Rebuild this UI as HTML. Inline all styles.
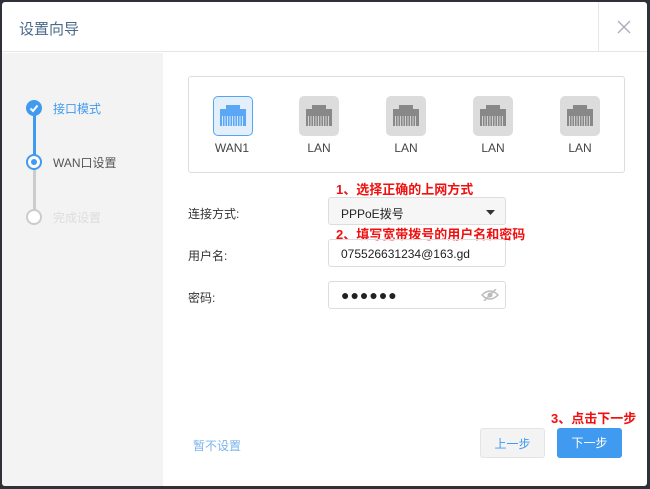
<!DOCTYPE html>
<html><head><meta charset="utf-8"><style>
*{margin:0;padding:0;box-sizing:border-box}
body{width:650px;height:489px;background:#2e3138;font-family:"Liberation Sans","Noto Sans CJK SC",sans-serif;position:relative;overflow:hidden}
.dlg{position:absolute;left:2px;top:2px;width:645px;height:484px;background:#fff;border-radius:3px;overflow:hidden}
.hd{position:absolute;left:0;top:0;width:100%;height:50px;border-bottom:1px solid #e6e6e6}
.hd .t{position:absolute;left:17px;top:16px;font-size:15px;color:#4a6a8a}
.hd .x{position:absolute;left:596px;top:0;width:49px;height:50px;border-left:1px solid #e6e6e6}
.side{position:absolute;left:0;top:51px;width:161px;height:433px;background:#f3f3f3}
.a{position:absolute;font-size:12px;white-space:nowrap}
.c{position:absolute;width:16px;height:16px;border-radius:50%}
.port{position:absolute;width:40px;height:40px;border-radius:5px;background:#dcdcdc;top:94px}
.pl{position:absolute;top:139px;font-size:12px;color:#444;width:60px;text-align:center}
.inp{position:absolute;left:326px;width:178px;height:28px;border:1px solid #ddd;border-radius:3px;font-size:12px;color:#222;padding:7px 0 0 12px}
.red{position:absolute;color:#f01010;font-weight:bold;font-size:13px;white-space:nowrap}
.btn{position:absolute;top:426px;width:65px;height:30px;border-radius:3px;font-size:12px;text-align:center;line-height:30px}
</style></head><body>
<div class="dlg">
<div class="hd"><div class="t">设置向导</div><div class="x"><svg width="49" height="50"><path d="M19 19L31 31M31 19L19 31" stroke="#aab" stroke-width="1.3"/></svg></div></div>
<div class="side">
<div style="position:absolute;left:31px;top:55px;width:3px;height:54px;background:#3f9af0"></div>
<div style="position:absolute;left:31px;top:109px;width:3px;height:54px;background:#ccc"></div>
<div class="c" style="left:24px;top:47px;background:#3f9af0"><svg width="16" height="16"><path d="M4.5 8.5L7 11L11.5 5.5" stroke="#fff" stroke-width="2" fill="none"/></svg></div>
<div class="c" style="left:24px;top:101px;background:#fff;border:2px solid #3f9af0"><div style="position:absolute;left:3px;top:3px;width:6px;height:6px;border-radius:50%;background:#3f9af0"></div></div>
<div class="c" style="left:24px;top:156px;background:#fff;border:2px solid #ccc"></div>
<div class="a" style="left:51px;top:47px;color:#3f9af0">接口模式</div>
<div class="a" style="left:51px;top:101px;color:#555">WAN口设置</div>
<div class="a" style="left:51px;top:156px;color:#ddd">完成设置</div>
</div>
<div style="position:absolute;left:186px;top:74px;width:437px;height:97px;border:1px solid #ddd;border-radius:3px"></div>
<div class="port" style="left:211px;background:#e3f0fc;border:1px solid #55a5f5"><svg width="38" height="38"><path d="M12 8h14v4h6v17H6V12h6z" fill="#5aa8f5"/><path d="M8.5 19v10M11 19v10M13.5 19v10M16 19v10M18.5 19v10M21 19v10M23.5 19v10M26 19v10M28.5 19v10" stroke="#e3f0fc" stroke-width=".9"/></svg></div>
<div class="pl" style="left:200px">WAN1</div>
<div class="port" style="left:297px"><svg width="40" height="40"><path d="M13 9h14v4h6v17H7V13h6z" fill="#888"/><path d="M9.5 20v10M12 20v10M14.5 20v10M17 20v10M19.5 20v10M22 20v10M24.5 20v10M27 20v10M29.5 20v10" stroke="#dcdcdc" stroke-width=".9"/></svg></div><div class="pl" style="left:287px">LAN</div>
<div class="port" style="left:384px"><svg width="40" height="40"><path d="M13 9h14v4h6v17H7V13h6z" fill="#888"/><path d="M9.5 20v10M12 20v10M14.5 20v10M17 20v10M19.5 20v10M22 20v10M24.5 20v10M27 20v10M29.5 20v10" stroke="#dcdcdc" stroke-width=".9"/></svg></div><div class="pl" style="left:374px">LAN</div>
<div class="port" style="left:471px"><svg width="40" height="40"><path d="M13 9h14v4h6v17H7V13h6z" fill="#888"/><path d="M9.5 20v10M12 20v10M14.5 20v10M17 20v10M19.5 20v10M22 20v10M24.5 20v10M27 20v10M29.5 20v10" stroke="#dcdcdc" stroke-width=".9"/></svg></div><div class="pl" style="left:461px">LAN</div>
<div class="port" style="left:558px"><svg width="40" height="40"><path d="M13 9h14v4h6v17H7V13h6z" fill="#888"/><path d="M9.5 20v10M12 20v10M14.5 20v10M17 20v10M19.5 20v10M22 20v10M24.5 20v10M27 20v10M29.5 20v10" stroke="#dcdcdc" stroke-width=".9"/></svg></div><div class="pl" style="left:548px">LAN</div>

<div class="red" style="left:334px;top:177px">1、选择正确的上网方式</div>
<div class="red" style="left:334px;top:222px">2、填写宽带拨号的用户名和密码</div>
<div class="red" style="left:549px;top:406px">3、点击下一步</div>

<div class="a" style="left:186px;top:203px;color:#333">连接方式:</div>
<div class="a" style="left:186px;top:245px;color:#333">用户名:</div>
<div class="a" style="left:186px;top:287px;color:#333">密码:</div>
<div class="inp" style="top:195px;background:#f6f6f6">PPPoE拨号<svg style="position:absolute;right:10px;top:12px" width="9" height="5"><path d="M0 0h9L4.5 5z" fill="#333"/></svg></div>
<div class="inp" style="top:237px">075526631234@163.gd</div>
<div class="inp" style="top:279px;font-size:14px;padding-top:5px;letter-spacing:1px">●●●●●●<svg style="position:absolute;right:6px;top:7px" width="18" height="12"><path d="M1 6Q9 -2 17 6Q9 14 1 6z" fill="none" stroke="#bbb" stroke-width="1.5"/><circle cx="9" cy="6" r="2.5" fill="#bbb"/><path d="M3 12L15 0" stroke="#bbb" stroke-width="1.5"/></svg></div>

<div class="a" style="left:191px;top:435px;color:#7ab4ee">暂不设置</div>
<div class="btn" style="left:478px;background:#f3f3f3;border:1px solid #e4e4e4;color:#3f9af0">上一步</div>
<div class="btn" style="left:555px;background:#3f9af0;color:#fff">下一步</div>
</div>
</body></html>
